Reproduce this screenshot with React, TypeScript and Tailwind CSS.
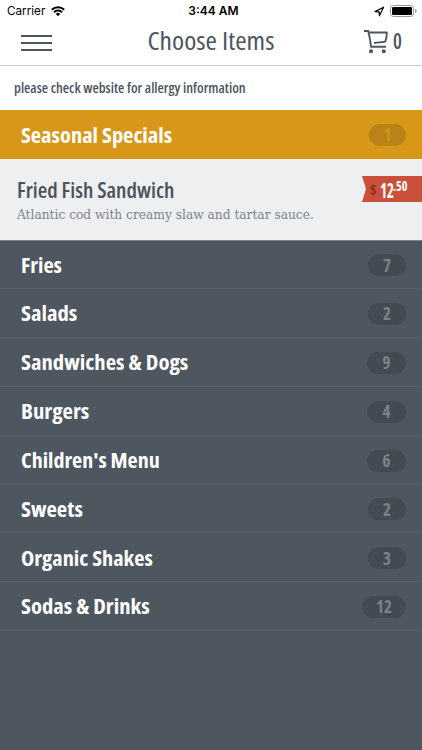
import clsx from "clsx";

const categories = [
  { name: "Fries", count: 7, width: "w-[38px]", scale: "scale-x-[1.06]" },
  { name: "Salads", count: 2, width: "w-[38px]", scale: "scale-x-[1.08]" },
  { name: "Sandwiches & Dogs", count: 9, width: "w-[39px]", scale: "scale-x-[1.08]" },
  { name: "Burgers", count: 4, width: "w-[39px]", scale: "scale-x-[1.08]" },
  { name: "Children's Menu", count: 6, width: "w-[39px]", scale: "scale-x-[1.05]" },
  { name: "Sweets", count: 2, width: "w-[38px]", scale: "scale-x-[1.08]" },
  { name: "Organic Shakes", count: 3, width: "w-[38px]", scale: "scale-x-[1.065]" },
  { name: "Sodas & Drinks", count: 12, width: "w-[44px]", scale: "scale-x-[1.075]" },
];

const StatusBar = () => (
  <div className="flex h-[22px] items-center justify-between pl-[7px] pr-[5px] font-['Inter',sans-serif] text-black [font-stretch:100%]">
    <div className="flex w-[120px] items-center gap-[6px]">
      <span className="pt-px text-[11.7px]">Carrier</span>
      <svg width="14" height="10" viewBox="0 0 14 10" fill="none" stroke="black" strokeWidth="2">
        <path d="M0.8 3.8a8.8 8.8 0 0 1 12.4 0" />
        <path d="M3 6.2a5.7 5.7 0 0 1 8 0" />
        <path d="M4.8 7.9a3.1 3.1 0 0 1 4.4 0L7 10.2z" fill="black" stroke="none" />
      </svg>
    </div>
    <span className="ml-[3px] text-[12px] font-semibold">3:44 AM</span>
    <div className="flex w-[120px] items-center justify-end gap-[5px]">
      <svg width="11" height="11" viewBox="0 0 11 11" fill="none" stroke="black" strokeWidth="1.2" strokeLinejoin="round">
        <path d="M1 5.6 9.6 1.2 5.4 9.8 5.2 5.8z" />
      </svg>
      <svg width="27" height="12" viewBox="0 0 27 12">
        <rect x="0.5" y="0.5" width="23" height="11" rx="2.8" fill="none" stroke="#999" />
        <rect x="2" y="2" width="20" height="8" rx="1.3" fill="black" />
        <path d="M25 4v4c1-.4 1.6-1 1.6-2S26 4.4 25 4z" fill="#999" />
      </svg>
    </div>
  </div>
);

const Header = () => (
  <div className="flex h-[44px] items-start justify-between border-b border-[#c8c8ca] pl-[21px] pr-[20px] text-[#4d555f]">
    <div className="mt-[13px] flex w-[31px] flex-col gap-[5px]">
      <div className="h-[2px] bg-[#4d555f]" />
      <div className="h-[2px] bg-[#4d555f]" />
      <div className="h-[2px] bg-[#4d555f]" />
    </div>
    <h1 className="ml-[5px] mt-[1px] scale-x-[1.06] whitespace-nowrap text-[26px] leading-[34px]">Choose Items</h1>
    <div className="flex items-start">
      <svg className="mt-[7px]" width="24" height="25" viewBox="0 0 24 25" fill="none" stroke="#4d555f" strokeWidth="1.9">
        <path d="M0 2H4.3C5 6 6.5 11 7 17.7H22" strokeLinejoin="round" />
        <path d="M5.2 3.5H22.8C22.8 7 22.2 10.5 21.3 12.7C18 13.5 14 13.2 10 14" strokeLinejoin="round" />
        <circle cx="7" cy="22.2" r="2" fill="#4d555f" stroke="none" />
        <circle cx="19.8" cy="22.2" r="2" fill="#4d555f" stroke="none" />
      </svg>
      <span className="ml-[4px] mt-[3px] origin-right scale-x-[0.9] text-[22px] font-semibold leading-[30px]">0</span>
    </div>
  </div>
);

const App = () => {
  return (
    <div className="flex h-[750px] w-[422px] flex-col overflow-hidden bg-[#4e565f] font-['Open_Sans',sans-serif] [font-stretch:75%]">
      <div className="bg-white">
        <StatusBar />
        <Header />
        <div className="flex h-[44px] items-start pl-[14px] pt-[12px]">
          <span className="origin-left scale-x-[1.065] whitespace-nowrap text-[13.5px] font-semibold leading-5 text-[#4d555f]">
            please check website for allergy information
          </span>
        </div>
      </div>

      <div className="flex h-[49px] items-center justify-between bg-[#d79719] pl-[21px] pr-[16px]">
        <span className="origin-left scale-x-[1.07] pt-[2px] text-[21px] font-bold text-white">Seasonal Specials</span>
        <span className="flex h-[22px] w-[37px] items-center justify-center rounded-full bg-[#b98318] text-[17px] font-bold text-[#d19319]">
          1
        </span>
      </div>

      <div className="flex h-[81px] justify-between border-t border-[#f8f4e8] bg-[#eeeff1] pl-[17px]">
        <div className="flex flex-col items-start pt-[16px]">
          <h2 className="origin-left scale-x-[1.04] text-[21px] font-semibold leading-7 text-[#4b525b]">Fried Fish Sandwich</h2>
          <p className="whitespace-nowrap font-['DejaVu_Serif',serif] text-[13.6px] leading-5 text-[#7b838f]">
            Atlantic cod with creamy slaw and tartar sauce.
          </p>
        </div>
        <div className="mt-[16px] flex h-[26px] w-[60px] shrink-0 items-start bg-[#cb503a] pl-[8px] text-white [clip-path:polygon(0_0,100%_0,100%_100%,0_100%,4px_50%)]">
          <span className="text-[14px] font-bold leading-[27px] text-[#8b2f25]">$</span>
          <span className="ml-[3px] origin-left scale-x-[0.68] text-[22px] font-bold leading-[26px]">12</span>
          <span className="-ml-[7px] origin-left scale-x-[0.87] text-[14px] font-bold leading-[20px]">.50</span>
        </div>
      </div>

      {categories.map((c, i) => (
        <div
          key={c.name}
          className={clsx(
            "flex h-[48.9px] shrink-0 items-center justify-between border-b border-b-[#59616b] pl-[21px] pr-[16px]",
            i === 0 && "border-t border-t-[#7d8389]"
          )}
        >
          <span className={clsx("origin-left whitespace-nowrap pt-[2px] text-[21px] font-bold text-white", c.scale)}>
            {c.name}
          </span>
          <span
            className={clsx(
              "mt-[2px] flex h-[22px] items-center justify-center rounded-full bg-[#434a52] text-[17px] font-bold text-[#7a838d]",
              c.width
            )}
          >
            {c.count}
          </span>
        </div>
      ))}
    </div>
  );
};

export default App;
